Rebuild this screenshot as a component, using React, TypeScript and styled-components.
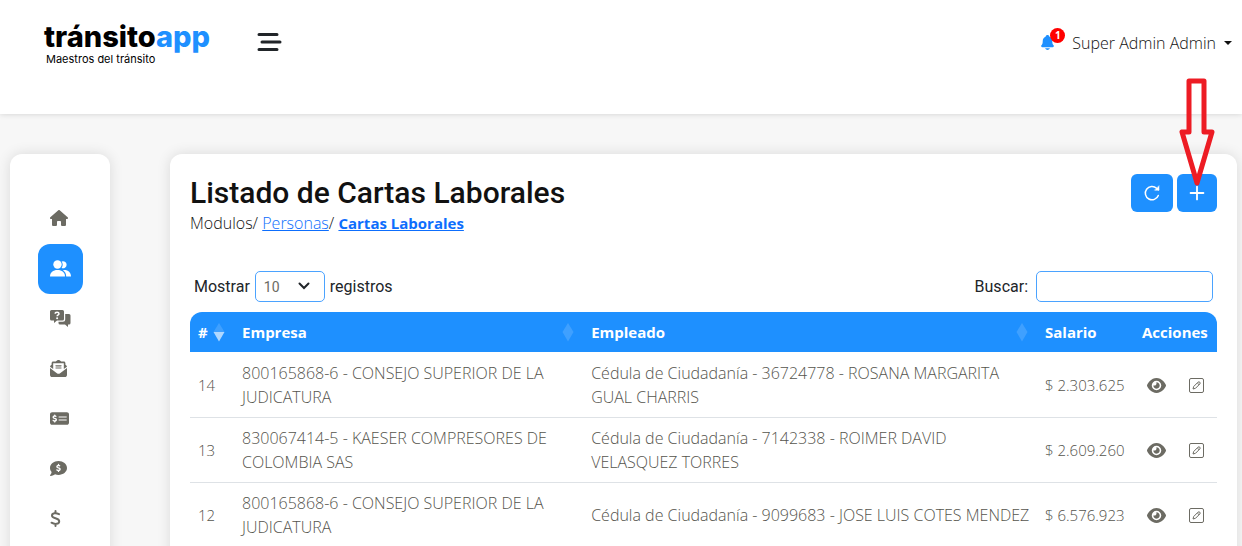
import React from "react";
import styled, { createGlobalStyle } from "styled-components";
import { FaHouse, FaEnvelopeOpenText, FaMoneyCheckDollar, FaCommentDollar, FaEye } from "react-icons/fa6";
import { IoNotifications } from "react-icons/io5";
import { Plus } from "lucide-react";

const GlobalStyle = createGlobalStyle`
  *, *::before, *::after { box-sizing: border-box; }
  body {
    margin: 0;
    background: #f7f7f7;
    color: #212529;
    font-family: "Open Sans", "Noto Sans", sans-serif;
    font-size: 16px;
    font-weight: 300;
    line-height: 24px;
  }
  button, input, select { font: inherit; }
`;

const Page = styled.div`
  height: 100vh;
  overflow: hidden;
`;

const Header = styled.header`
  display: flex;
  align-items: flex-start;
  height: 114px;
  padding: 21px 10px 0 44px;
  background: #fff;
  box-shadow: 0 0 6px rgba(0, 0, 0, 0.16);
`;

const Logo = styled.a`
  display: flex;
  flex-direction: column;
  width: 170px;
  color: #000;
  text-decoration: none;
  font-family: Inter, sans-serif;
`;

const LogoName = styled.span`
  font-size: 29px;
  font-weight: 800;
  line-height: 32px;
  white-space: nowrap;
`;

const LogoAccent = styled.span`
  color: #1e90ff;
`;

const LogoTagline = styled.span`
  padding-left: 2px;
  font-size: 11px;
  font-weight: 400;
  line-height: 12px;
`;

const MenuButton = styled.button`
  display: flex;
  margin: 11px auto 0 43px;
  padding: 0;
  border: 0;
  background: none;
  color: #212529;
`;

const BellButton = styled.button`
  position: relative;
  display: flex;
  margin: 13px 16px 0 0;
  padding: 0;
  border: 0;
  background: none;
  color: #1e90ff;
`;

const Badge = styled.span`
  position: absolute;
  top: -6px;
  right: -9px;
  width: 15px;
  height: 15px;
  border-radius: 50%;
  background: red;
  color: #fff;
  font-size: 10px;
  font-weight: 700;
  line-height: 15px;
  text-align: center;
`;

const UserButton = styled.button`
  display: flex;
  align-items: center;
  gap: 8px;
  margin-top: 10px;
  padding: 0;
  border: 0;
  background: none;
  color: #111;
  &::after {
    content: "";
    border: 4px solid transparent;
    border-top-color: currentColor;
    border-bottom: 0;
  }
`;

const Body = styled.div`
  display: flex;
  gap: 60px;
  height: 100%;
  padding: 40px 5px 0 10px;
`;

const Sidebar = styled.nav`
  flex: none;
  width: 100px;
  padding: 40px 28px;
  border-radius: 12px;
  background: #fff;
  box-shadow: 0 0 14px rgba(0, 0, 0, 0.12);
`;

const SideLink = styled.a<{ $active?: boolean }>`
  display: flex;
  align-items: center;
  width: 45px;
  height: 50px;
  padding: 0 0 2px 12px;
  border-radius: 12px;
  background: ${(p) => (p.$active ? "#1e90ff" : "transparent")};
  color: ${(p) => (p.$active ? "#fff" : "#6c6b63")};
`;

const Panel = styled.main`
  flex: 1;
  min-width: 0;
  padding: 20px;
  border-radius: 12px;
  background: #fff;
  box-shadow: 0 0 14px rgba(0, 0, 0, 0.12);
`;

const PanelHead = styled.div`
  display: flex;
  justify-content: space-between;
  align-items: flex-start;
`;

const Title = styled.h1`
  margin: 0;
  color: #111;
  font-family: Roboto, sans-serif;
  font-size: 30px;
  font-weight: 500;
  line-height: 37px;
`;

const Crumbs = styled.nav`
  color: #111;
  a { color: #0d6efd; }
`;

const CurrentCrumb = styled.a`
  font-size: 15px;
  font-weight: 700;
`;

const HeadActions = styled.div`
  display: flex;
  gap: 4px;
`;

const ActionButton = styled.button<{ $pad: number }>`
  display: flex;
  align-items: center;
  justify-content: center;
  height: 38px;
  padding: 0 ${(p) => p.$pad}px;
  border: 0;
  border-radius: 6px;
  background: #1e90ff;
  color: #fff;
`;

const Controls = styled.div`
  display: flex;
  justify-content: space-between;
  margin-top: 36px;
  padding: 0 4px;
  color: #212529;
  font-family: Roboto, sans-serif;
  font-weight: 400;
`;

const ControlLabel = styled.label<{ $gap: number }>`
  display: flex;
  align-items: center;
  gap: ${(p) => p.$gap}px;
`;

const SelectWrap = styled.span`
  position: relative;
  display: flex;
  svg {
    position: absolute;
    top: 10px;
    right: 15px;
    pointer-events: none;
  }
`;

const SizeSelect = styled.select`
  width: 70px;
  height: 31px;
  padding: 0 8px;
  appearance: none;
  border: 1px solid #4ba3ff;
  border-radius: 5px;
  background: #fff;
  color: #6c6b63;
  font-size: 14px;
`;

const SearchInput = styled.input`
  width: 177px;
  height: 31px;
  padding: 0 8px;
  border: 1px solid #4ba3ff;
  border-radius: 5px;
  background: #fff;
`;

const Table = styled.table`
  width: 100%;
  margin-top: 10px;
  border-spacing: 0;
  table-layout: fixed;
  color: #55544d;
`;

const Col = styled.col<{ $width?: string }>`
  width: ${(p) => p.$width || "auto"};
`;

const HeadCell = styled.th`
  padding: 8px;
  border-bottom: 1px solid #fff;
  background: #1e90ff;
  color: #fff;
  font-size: 15px;
  font-weight: 700;
  text-align: left;
  &:first-child { border-top-left-radius: 12px; }
  &:last-child { border-top-right-radius: 12px; }
`;

const HeadContent = styled.div`
  display: flex;
  align-items: center;
  justify-content: space-between;
  padding-right: 1px;
`;

const Cell = styled.td<{ $numeric?: boolean }>`
  padding: 8px 4px 8px 8px;
  border-bottom: 1px solid #dee2e6;
  font-size: ${(p) => (p.$numeric ? 15 : 16)}px;
  vertical-align: middle;
`;

const RowActions = styled.div`
  display: flex;
  align-items: center;
  gap: 23px;
  padding-left: 5px;
  color: #6c6b63;
`;

const IconButton = styled.button`
  display: flex;
  padding: 0;
  border: 0;
  background: none;
  color: inherit;
`;

const Pointer = styled.svg`
  position: absolute;
  top: 77px;
  right: 26px;
`;

function SortMark({ desc }: { desc?: boolean }) {
  return (
    <svg width="12" height="20" viewBox="0 0 12 20" fill="#fff" aria-hidden="true">
      <path d="M6 1 11.500 10H0.500z" opacity="0.15" />
      <path d="M6 19.500 0.500 10H11.500z" opacity={desc ? 0.65 : 0.15} />
    </svg>
  );
}

function PeopleIcon() {
  return (
    <svg width="21" height="17" viewBox="0 0 21 17" fill="currentColor" aria-hidden="true">
      <circle cx="7.500" cy="4.500" r="4.200" />
      <path d="M0 16.500C0 12.500 3 10 7.500 10s7.500 2.500 7.500 6.500z" />
      <path d="M11.600 1.600A3.500 3.500 0 1 1 11.600 7.900 5.500 5.500 0 0 0 11.600 1.600z" />
      <path d="M13 10.200C17.500 9.500 21 12.300 21 16.500H16.200C16.200 13.700 15 11.600 13 10.200z" />
    </svg>
  );
}

function RefreshIcon() {
  return (
    <svg width="18" height="18" viewBox="0 0 18 18" fill="none" stroke="currentColor" strokeWidth="1.500" strokeLinecap="round" aria-hidden="true">
      <path d="M15.300 11.500A6.700 6.700 0 1 1 13.600 4.200L15.500 5.800" />
      <path d="M16 2V6.200H11.800z" fill="currentColor" strokeWidth="0.500" strokeLinejoin="round" />
    </svg>
  );
}

function QuestionChatIcon() {
  return (
    <svg width="21" height="17" viewBox="0 0 21 17" fill="currentColor" aria-hidden="true">
      <path d="M1.500 0h11a1.500 1.500 0 0 1 1.500 1.500v7.500a1.500 1.500 0 0 1-1.500 1.500H7L4 13v-2.500H1.500A1.500 1.500 0 0 1 0 9V1.500A1.500 1.500 0 0 1 1.500 0z" />
      <path d="M15.200 4H19a1.500 1.500 0 0 1 1.500 1.500V13a1.500 1.500 0 0 1-1.500 1.500H18V17l-3-2.500h-5A1.500 1.500 0 0 1 8.500 13V11.700h4.200a2.500 2.500 0 0 0 2.500-2.500z" />
      <path d="M5.200 3.700C5.200 1.800 9 1.800 9 3.700 9 4.800 7.100 4.800 7.100 6.200" fill="none" stroke="#fff" strokeWidth="1.500" />
      <circle cx="7.100" cy="8.200" r="1" fill="#fff" />
    </svg>
  );
}

function DollarIcon() {
  return (
    <svg width="11" height="17" viewBox="0 0 11 17" fill="none" stroke="currentColor" strokeWidth="2" strokeLinecap="round" aria-hidden="true">
      <path d="M5.500 1v2M5.500 14v2M9 4.200C6 2.600 2 3 2 5.700 2 9 9.200 7.500 9.200 11.200 9.200 14.500 4.500 14.500 1.500 12.700" />
    </svg>
  );
}

function EditIcon() {
  return (
    <svg width="15" height="15" viewBox="0 0 15 15" fill="none" stroke="currentColor" aria-hidden="true">
      <rect x="0.500" y="0.500" width="14" height="14" rx="1.500" />
      <path d="M4 11 4.700 8.500 9 4.200Q10 3.400 10.800 4.200 11.600 5 10.800 6L6.500 10.300zM8.300 5l1.700 1.700" />
    </svg>
  );
}

const sideItems = [
  { label: "Inicio", icon: <FaHouse size={18} /> },
  { label: "Personas", icon: <PeopleIcon />, active: true },
  { label: "Consultas", icon: <QuestionChatIcon /> },
  { label: "Correspondencia", icon: <FaEnvelopeOpenText size={17} /> },
  { label: "Pagos", icon: <FaMoneyCheckDollar size={19} /> },
  { label: "Cobros", icon: <FaCommentDollar size={17} /> },
  { label: "Finanzas", icon: <DollarIcon /> },
];

const rows = [
  { id: 14, company: "800165868-6 - CONSEJO SUPERIOR DE LA JUDICATURA", employee: "Cédula de Ciudadanía - 36724778 - ROSANA MARGARITA GUAL CHARRIS", salary: "$ 2.303.625" },
  { id: 13, company: "830067414-5 - KAESER COMPRESORES DE COLOMBIA SAS", employee: "Cédula de Ciudadanía - 7142338 - ROIMER DAVID VELASQUEZ TORRES", salary: "$ 2.609.260" },
  { id: 12, company: "800165868-6 - CONSEJO SUPERIOR DE LA JUDICATURA", employee: "Cédula de Ciudadanía - 9099683 - JOSE LUIS COTES MENDEZ", salary: "$ 6.576.923" },
];

export default function App() {
  return (
    <Page>
      <GlobalStyle />
      <Header>
        <Logo href="#">
          <LogoName>tránsito<LogoAccent>app</LogoAccent></LogoName>
          <LogoTagline>Maestros del tránsito</LogoTagline>
        </Logo>
        <MenuButton aria-label="Menú">
          <svg width="25" height="20" viewBox="0 0 25 20" stroke="currentColor" strokeWidth="3" strokeLinecap="round">
            <path d="M2 2.500H20M5 10H23M2 17.500H20" />
          </svg>
        </MenuButton>
        <BellButton aria-label="Notificaciones">
          <IoNotifications size={17} />
          <Badge>1</Badge>
        </BellButton>
        <UserButton>Super Admin Admin</UserButton>
      </Header>
      <Body>
        <Sidebar>
          {sideItems.map((item) => (
            <SideLink key={item.label} href="#" aria-label={item.label} $active={item.active}>
              {item.icon}
            </SideLink>
          ))}
        </Sidebar>
        <Panel>
          <PanelHead>
            <div>
              <Title>Listado de Cartas Laborales</Title>
              <Crumbs>
                Modulos/ <a href="#">Personas</a>/ <CurrentCrumb href="#">Cartas Laborales</CurrentCrumb>
              </Crumbs>
            </div>
            <HeadActions>
              <ActionButton $pad={12} aria-label="Actualizar"><RefreshIcon /></ActionButton>
              <ActionButton $pad={9} aria-label="Agregar"><Plus size={22} strokeWidth={2} /></ActionButton>
            </HeadActions>
          </PanelHead>
          <Controls>
            <ControlLabel $gap={5}>
              Mostrar
              <SelectWrap>
                <SizeSelect defaultValue="10">
                  <option>10</option>
                  <option>25</option>
                  <option>50</option>
                </SizeSelect>
                <svg width="12" height="10" viewBox="0 0 12 10" fill="none" stroke="#212529" strokeWidth="2" strokeLinecap="round">
                  <path d="M1.500 2.500 6 7l4.500-4.500" />
                </svg>
              </SelectWrap>
              registros
            </ControlLabel>
            <ControlLabel $gap={8}>
              Buscar:
              <SearchInput type="search" />
            </ControlLabel>
          </Controls>
          <Table>
            <colgroup>
              <Col $width="44px" />
              <Col $width="34%" />
              <Col />
              <Col $width="97px" />
              <Col $width="83px" />
            </colgroup>
            <thead>
              <tr>
                <HeadCell><HeadContent>#<SortMark desc /></HeadContent></HeadCell>
                <HeadCell><HeadContent>Empresa<SortMark /></HeadContent></HeadCell>
                <HeadCell><HeadContent>Empleado<SortMark /></HeadContent></HeadCell>
                <HeadCell>Salario</HeadCell>
                <HeadCell>Acciones</HeadCell>
              </tr>
            </thead>
            <tbody>
              {rows.map((row) => (
                <tr key={row.id}>
                  <Cell $numeric>{row.id}</Cell>
                  <Cell>{row.company}</Cell>
                  <Cell>{row.employee}</Cell>
                  <Cell $numeric>{row.salary}</Cell>
                  <Cell>
                    <RowActions>
                      <IconButton aria-label="Ver"><FaEye size={19} /></IconButton>
                      <IconButton aria-label="Editar"><EditIcon /></IconButton>
                    </RowActions>
                  </Cell>
                </tr>
              ))}
            </tbody>
          </Table>
        </Panel>
      </Body>
      <Pointer width="38" height="112" viewBox="0 0 38 112" fill="none" stroke="#ed1c24" strokeWidth="5" strokeLinejoin="round" aria-hidden="true">
        <path d="M11 4H26V55H34L19 106 4 55H11z" />
      </Pointer>
    </Page>
  );
}
